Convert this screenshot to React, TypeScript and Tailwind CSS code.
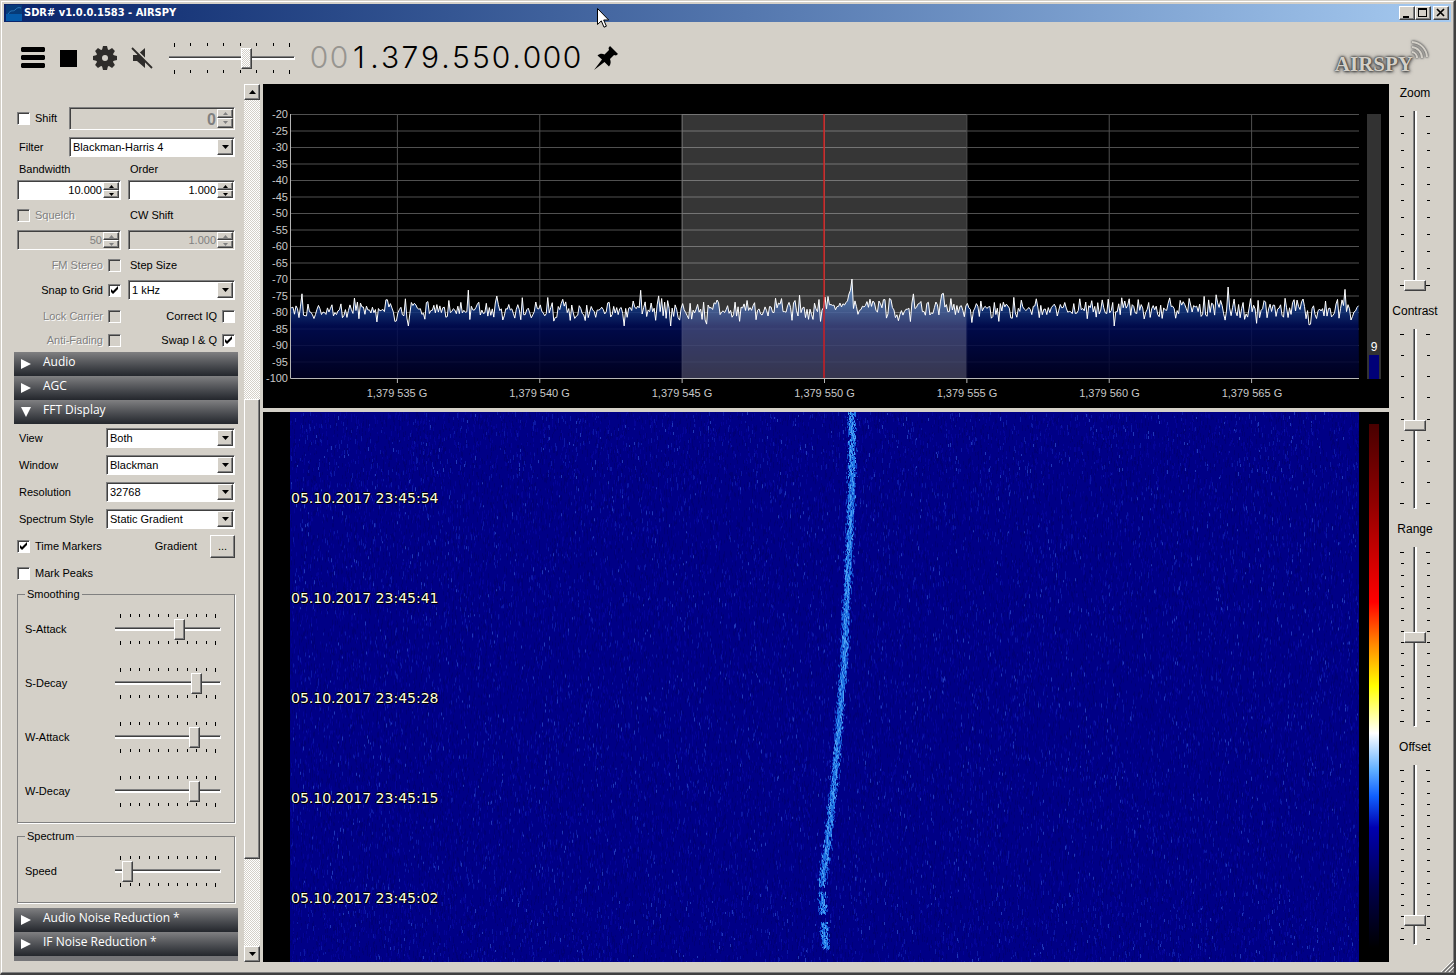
import { useId } from 'react';
import type { ReactNode } from 'react';
import clsx from 'clsx';

const raised = 'bg-[#d4d0c8] border border-t-white border-l-white border-r-[#404040] border-b-[#404040] shadow-[inset_-1px_-1px_0_#808080]';
const sunken = 'border border-t-[#808080] border-l-[#808080] border-r-white border-b-white shadow-[inset_1px_1px_0_#404040]';
const dither = 'bg-[repeating-conic-gradient(#ffffff_0_25%,#d4d0c8_0_50%)] bg-[length:2px_2px]';
const disabledText = 'text-[#808080] [text-shadow:1px_1px_0_white]';

function createRandom(seed: number) {
  let s = seed;
  return () => {
    s = (s * 1664525 + 1013904223) % 4294967296;
    return s / 4294967296;
  };
}

/* ---------- spectrum data ---------- */

const PLOT_W = 1070;
const PLOT_H = 264;

function buildSpectrum() {
  const rnd = createRandom(77);
  const points: string[] = [];
  for (let x = 0; x <= PLOT_W; x += 1.5) {
    const spread = rnd() < 0.14 ? 26 : 13;
    let y = 195 + (rnd() + rnd() - 1) * spread;
    const d = x - 562.5;
    // the carrier climbs slowly and drops off sharply
    if (d > -18 && d <= 0) y = y * 0.3 + 0.7 * (195 - 30 * Math.exp(d / 6));
    if (d > 0 && d < 10) y -= 20 * Math.exp(-d / 2);
    if (d === 0) y = 165;
    y = Math.max(165, Math.min(212, y));
    points.push(`${x.toFixed(1)},${y.toFixed(1)}`);
  }
  return points.join(' ');
}

const spectrum = buildSpectrum();

const levels = Array.from({ length: 17 }, (_, i) => -20 - i * 5);
const frequencies = ['535', '540', '545', '550', '555', '560', '565'];

/* ---------- waterfall data ---------- */

const FALL_W = 1069;
const FALL_H = 549;

function buildSpecks(seed: number, count: number, minLen: number, maxLen: number) {
  const rnd = createRandom(seed);
  let d = '';
  for (let i = 0; i < count; i += 1) {
    const x = Math.floor(rnd() * FALL_W);
    const y = Math.floor(rnd() * FALL_H);
    const len = Math.round(minLen + rnd() * (maxLen - minLen));
    d += `M${x}.5 ${y}v${len}`;
  }
  return d;
}

const carrier = [
  [0, 562], [70, 562], [140, 559], [200, 556], [250, 554], [300, 550],
  [350, 546], [400, 541], [450, 535], [472, 532], [500, 533], [549, 537],
];

function carrierX(y: number) {
  for (let i = 1; i < carrier.length; i += 1) {
    const [y0, x0] = carrier[i - 1];
    const [y1, x1] = carrier[i];
    if (y <= y1) return x0 + ((x1 - x0) * (y - y0)) / (y1 - y0);
  }
  return 537;
}

function buildCarrier(seed: number, perLine: number, width: number) {
  const rnd = createRandom(seed);
  let d = '';
  for (let y = 0; y < 535; y += 1) {
    const gap = (y > 472 && y < 479) || (y > 499 && y < 509);
    for (let i = 0; i < perLine && !gap; i += 1) {
      const x = Math.floor(carrierX(y) + (rnd() + rnd() - 1) * width);
      d += `M${x}.5 ${y}v${1 + Math.floor(rnd() * 3)}`;
    }
  }
  return d;
}

const specks = [
  { d: buildSpecks(3, 22000, 2, 6), color: '#000078' },
  { d: buildSpecks(11, 16000, 2, 5), color: '#040496' },
  { d: buildSpecks(29, 5000, 2, 5), color: '#0c18a4' },
  { d: buildSpecks(41, 1100, 2, 4), color: '#2038b8' },
  { d: buildCarrier(5, 3, 6), color: '#1048c8' },
  { d: buildCarrier(8, 3, 4), color: '#1e74e4' },
  { d: buildCarrier(13, 1, 4), color: '#4ca0f4' },
];

const timeMarkers = ['23:45:54', '23:45:41', '23:45:28', '23:45:15', '23:45:02'];

/* ---------- controls ---------- */

function CheckBox({
  label, checked, disabled, boxRight,
}: {
  label: string;
  checked?: boolean;
  disabled?: boolean;
  boxRight?: boolean;
}) {
  return (
    <label
      className={clsx(
        'flex items-center gap-[5px]',
        boxRight && 'flex-row-reverse justify-start',
        disabled && disabledText,
      )}
    >
      <span className="grid h-[13px] w-[13px]">
        <input
          type="checkbox"
          defaultChecked={checked}
          disabled={disabled}
          className={clsx('peer col-start-1 row-start-1 h-[13px] w-[13px] appearance-none bg-white disabled:bg-[#d4d0c8]', sunken)}
        />
        <svg viewBox="0 0 13 13" className="pointer-events-none col-start-1 row-start-1 hidden peer-checked:block" aria-hidden="true">
          <path d="M3 5v3l2 2 5-5V2L5 7z" fill="black" />
        </svg>
      </span>
      <span>{label}</span>
    </label>
  );
}

function Select({ id, value, className }: { id: string; value: string; className?: string }) {
  return (
    <div className={clsx('relative h-5', className)}>
      <select id={id} defaultValue={value} className={clsx('h-5 w-full appearance-none bg-white pl-[3px] leading-4 text-black', sunken)}>
        <option>{value}</option>
      </select>
      <span className={clsx('pointer-events-none absolute top-[2px] right-[2px] flex h-4 w-4 items-center justify-center', raised)}>
        <svg viewBox="0 0 7 4" className="h-1 w-[7px]" aria-hidden="true"><path d="M0 0h7L3.5 4z" /></svg>
      </span>
    </div>
  );
}

function NumberBox({
  label, value, disabled, large,
}: {
  label: string;
  value: string;
  disabled?: boolean;
  large?: boolean;
}) {
  return (
    <div className={clsx('flex min-w-0 flex-1 p-px', sunken, large ? 'h-[23px]' : 'h-5', disabled ? 'bg-[#d4d0c8]' : 'bg-white')}>
      <input
        type="text"
        aria-label={label}
        defaultValue={value}
        disabled={disabled}
        className={clsx('w-0 min-w-0 flex-1 bg-transparent pr-px text-right disabled:text-[#808080]', large && 'pt-[3px] text-base font-bold')}
      />
      <div className="flex w-4 flex-col">
        {['up', 'down'].map((dir) => (
          <button key={dir} type="button" aria-label={`${label} ${dir}`} disabled={disabled} className={clsx('flex flex-1 items-center justify-center', raised)}>
            <svg viewBox="0 0 5 3" className={clsx('h-[3px] w-[5px]', disabled && 'fill-[#808080]')} aria-hidden="true">
              <path d={dir === 'up' ? 'M0 3h5L2.5 0z' : 'M0 0h5L2.5 3z'} />
            </svg>
          </button>
        ))}
      </div>
    </div>
  );
}

function Ticks({ count, vertical }: { count: number; vertical?: boolean }) {
  return (
    <div className={clsx('flex justify-between', vertical ? 'w-1 flex-col items-center py-[5px]' : 'h-1 px-[5px]')} aria-hidden="true">
      {Array.from({ length: count }, (_, i) => (
        <span key={i} className={clsx('bg-black', vertical ? 'h-px w-[3px] first:w-1 last:w-1' : 'h-[3px] w-px first:h-1 last:h-1')} />
      ))}
    </div>
  );
}

function Slider({
  id, label, value, ticks, disabled, className,
}: {
  id?: string;
  label?: string;
  value: number;
  ticks: number;
  disabled?: boolean;
  className?: string;
}) {
  return (
    <div className={clsx('flex flex-col gap-px', className)}>
      <Ticks count={ticks} />
      <div className="grid h-[21px] items-center">
        <span className="col-start-1 row-start-1 h-1 border-t border-r border-b-2 border-t-[#808080] border-r-white border-b-white bg-[#404040]" />
        <input
          id={id}
          aria-label={label}
          type="range"
          defaultValue={value}
          className={clsx(
            'col-start-1 row-start-1 m-0 h-[21px] w-full appearance-none bg-transparent',
            '[&::-webkit-slider-thumb]:h-[21px] [&::-webkit-slider-thumb]:w-[11px] [&::-webkit-slider-thumb]:appearance-none [&::-webkit-slider-thumb]:border [&::-webkit-slider-thumb]:border-t-white [&::-webkit-slider-thumb]:border-r-[#404040] [&::-webkit-slider-thumb]:border-b-[#404040] [&::-webkit-slider-thumb]:border-l-white [&::-webkit-slider-thumb]:shadow-[inset_-1px_-1px_0_#808080]',
            disabled
              ? '[&::-webkit-slider-thumb]:bg-[repeating-conic-gradient(#ffffff_0_25%,#d4d0c8_0_50%)] [&::-webkit-slider-thumb]:bg-[length:2px_2px]'
              : '[&::-webkit-slider-thumb]:bg-[#d4d0c8]',
          )}
        />
      </div>
      <Ticks count={ticks} />
    </div>
  );
}

function VerticalSlider({ label, value, ticks }: { label: string; value: number; ticks: number }) {
  const id = useId();
  return (
    <div className="flex h-[218px] flex-col items-center pt-px">
      <label htmlFor={id} className="mb-[10px] text-[12px] leading-4">{label}</label>
      <div className="flex h-[180px]">
        <Ticks count={ticks} vertical />
        <div className="grid w-[22px] justify-items-center">
          <span className="col-start-1 row-start-1 h-full w-1 border-r-2 border-b border-l border-r-white border-b-white border-l-[#808080] bg-[#404040]" />
          <input
            id={id}
            type="range"
            defaultValue={value}
            className="col-start-1 row-start-1 m-0 h-[180px] w-[22px] appearance-none bg-transparent [direction:rtl] [writing-mode:vertical-lr] [&::-webkit-slider-thumb]:h-[11px] [&::-webkit-slider-thumb]:w-[22px] [&::-webkit-slider-thumb]:appearance-none [&::-webkit-slider-thumb]:border [&::-webkit-slider-thumb]:border-t-white [&::-webkit-slider-thumb]:border-r-[#404040] [&::-webkit-slider-thumb]:border-b-[#404040] [&::-webkit-slider-thumb]:border-l-white [&::-webkit-slider-thumb]:bg-[#d4d0c8] [&::-webkit-slider-thumb]:shadow-[inset_-1px_-1px_0_#808080]"
          />
        </div>
        <Ticks count={ticks} vertical />
      </div>
    </div>
  );
}

function PanelHeader({ title, open }: { title: string; open?: boolean }) {
  return (
    <button
      type="button"
      aria-expanded={!!open}
      className="flex h-6 w-full shrink-0 items-start bg-linear-to-b from-[#808082] via-[#505256] to-[#24272d] pl-[7px] text-left font-['Open_Sans',sans-serif] text-[12px] leading-5 text-white"
    >
      <svg viewBox="0 0 10 10" className="mt-[7px] mr-3 h-[10px] w-[10px] fill-white" aria-hidden="true">
        <path d={open ? 'M0 0h10L5 10z' : 'M0 0l10 5L0 10z'} />
      </svg>
      {title}
    </button>
  );
}

function SelectRow({ label, value }: { label: string; value: string }) {
  const id = useId();
  return (
    <div className="flex h-[27px] items-center justify-between pl-[2px]">
      <label htmlFor={id}>{label}</label>
      <Select id={id} value={value} className="w-[129px]" />
    </div>
  );
}

function SliderRow({ label, value }: { label: string; value: number }) {
  const id = useId();
  return (
    <div className="flex h-[54px] items-center justify-between pr-[13px] pl-[7px]">
      <label htmlFor={id}>{label}</label>
      <Slider id={id} value={value} ticks={11} className="w-[106px]" />
    </div>
  );
}

function Group({ title, children }: { title: string; children: ReactNode }) {
  return (
    <fieldset className="mb-[5px] border border-[#808080] pb-1 shadow-[1px_1px_0_white]">
      <legend className="ml-[7px] bg-[#d4d0c8] px-[2px] leading-4">{title}</legend>
      {children}
    </fieldset>
  );
}

/* ---------- title bar and toolbar ---------- */

function TitleBar() {
  return (
    <header className="flex h-[18px] items-center bg-linear-to-r from-[#0a246a] to-[#a6caf0] px-[2px]">
      <svg viewBox="0 0 16 16" className="mr-[2px] h-4 w-4" aria-hidden="true">
        <rect width="16" height="16" fill="#063a78" />
        <path d="M0 9h16v7H0z" fill="#0559a8" />
        <path d="M2 9c3-5 5-2 7-4s3-3 6-2" fill="none" stroke="#2a76b8" />
      </svg>
      <h1 className="flex-1 font-['DejaVu_Sans_Condensed','DejaVu_Sans',sans-serif] text-[11px] font-bold text-white">SDR# v1.0.0.1583 - AIRSPY</h1>
      <div className="flex">
        <button type="button" aria-label="Minimize" className={clsx('h-[14px] w-4', raised)}>
          <svg viewBox="0 0 14 12"><path d="M3 9h6v2H3z" /></svg>
        </button>
        <button type="button" aria-label="Maximize" className={clsx('h-[14px] w-4', raised)}>
          <svg viewBox="0 0 14 12"><path d="M2 1h9v9H2zM3 3v6h7V3z" fillRule="evenodd" /></svg>
        </button>
        <button type="button" aria-label="Close" className={clsx('ml-[2px] h-[14px] w-4', raised)}>
          <svg viewBox="0 0 14 12"><path d="M3 2l7 7M10 2L3 9" stroke="black" strokeWidth="1.7" /></svg>
        </button>
      </div>
    </header>
  );
}

function Frequency() {
  return (
    <div className="flex font-['Inter',sans-serif] text-[30px] leading-8 font-light">
      {'001.379.550.000'.split('').map((c, i) => (
        <span key={i} className={clsx('text-center', c === '.' ? 'w-[11px]' : 'w-5', i < 2 && 'text-[#979590]')}>{c}</span>
      ))}
    </div>
  );
}

function AirspyLogo() {
  return (
    <div className="relative mt-3 mr-[38px]">
      <span className="font-['Liberation_Serif',serif] text-[21px] leading-6 font-bold text-[#d4d0c8] [text-shadow:0_0_2px_#333,0_0_3px_#444,0_0_5px_#666,1px_1px_3px_#666]">AIRSPY</span>
      <svg viewBox="0 0 20 20" className="absolute -top-3 -right-4 h-5 w-5 overflow-visible fill-none [filter:drop-shadow(0_0_1px_#555)_drop-shadow(0_0_1px_#777)]" stroke="#d4d0c8" strokeWidth="2" aria-hidden="true">
        <path d="M3 12a6 6 0 0 1 5 6M3 7a11 11 0 0 1 10 11M3 2a16 16 0 0 1 15 15" />
      </svg>
    </div>
  );
}

function Toolbar() {
  return (
    <div className="flex h-[62px] items-center pt-[10px] pl-[17px]">
      <button type="button" aria-label="Menu" className="mr-[15px]">
        <svg viewBox="0 0 24 22" className="h-[22px] w-6">
          <path d="M1 0h22l1 1v3l-1 1H1L0 4V1zM1 8h22l1 1v3l-1 1H1l-1-1V9zM1 16h22l1 1v3l-1 1H1l-1-1v-3z" />
        </svg>
      </button>
      <button type="button" aria-label="Stop" className="mr-4">
        <svg viewBox="0 0 17 17" className="h-[17px] w-[17px]"><path d="M0 0h17v17H0z" /></svg>
      </button>
      <button type="button" aria-label="Settings" className="mr-[14px]">
        <svg viewBox="-12 -12 24 24" className="h-6 w-6" fill="#2e2c2a">
          {[0, 45, 90, 135].map((angle) => (
            <path key={angle} transform={`rotate(${angle})`} d="M-2-12h4l1 4v16l-1 4h-4l-1-4V-8z" />
          ))}
          <circle r="9" />
          <circle r="3" fill="#d4d0c8" />
        </svg>
      </button>
      <button type="button" aria-label="Mute" className="mr-4">
        <svg viewBox="0 0 22 22" className="h-[22px] w-[22px]">
          <path d="M2 8h4l8-7v20l-8-7H2z" fill="#2e2c2a" />
          <path d="M2 0l20 20" stroke="#d4d0c8" strokeWidth="2" />
          <path d="M1 1l20 20" stroke="#2e2c2a" strokeWidth="1.8" />
        </svg>
      </button>
      <Slider label="Volume" value={63} ticks={8} disabled className="w-[126px]" />
      <div className="mb-[2px] ml-[14px]"><Frequency /></div>
      <button type="button" aria-label="Pin frequency" className="ml-3">
        <svg viewBox="0 0 24 24" className="h-6 w-6">
          <path d="M16 0l8 8-2 1.5-2-.5-4 4c1 2.500 1 5-1 7.500l-4.500-4.500L0 24l8-10.500L3.500 9.500c2-2 5-2 7-1L15 4l-.5-2z" />
        </svg>
      </button>
      <div className="flex-1" />
      <AirspyLogo />
    </div>
  );
}

/* ---------- left column ---------- */

function RadioPanel() {
  const filterId = useId();
  const stepId = useId();
  return (
    <div className="px-[3px] pt-5">
      <div className="flex h-7 items-center">
        <div className="w-[52px]"><CheckBox label="Shift" /></div>
        <NumberBox label="Shift value" value="0" disabled large />
      </div>
      <div className="flex h-[30px] items-center">
        <label htmlFor={filterId} className="w-[52px] pl-[2px]">Filter</label>
        <Select id={filterId} value="Blackman-Harris 4" className="flex-1" />
      </div>
      <div className="grid grid-cols-[104px_1fr] items-center gap-x-[7px]">
        <div className="h-[14px] pl-[2px] leading-[14px]">Bandwidth</div>
        <div className="h-[14px] pl-[2px] leading-[14px]">Order</div>
        <div className="flex h-7 items-center"><NumberBox label="Bandwidth" value="10.000" /></div>
        <div className="flex h-7 items-center"><NumberBox label="Order" value="1.000" /></div>
        <CheckBox label="Squelch" disabled />
        <div className="flex h-[22px] items-center pl-[2px]">CW Shift</div>
        <div className="flex h-7 items-center"><NumberBox label="Squelch level" value="50" disabled /></div>
        <div className="flex h-7 items-center"><NumberBox label="CW Shift" value="1.000" disabled /></div>
        <CheckBox label="FM Stereo" disabled boxRight />
        <label htmlFor={stepId} className="flex h-[22px] items-center pl-[2px]">Step Size</label>
        <CheckBox label="Snap to Grid" checked boxRight />
        <div className="flex h-7 items-center"><Select id={stepId} value="1 kHz" className="flex-1" /></div>
        <div className="flex h-6 flex-col justify-center"><CheckBox label="Lock Carrier" disabled boxRight /></div>
        <CheckBox label="Correct IQ" boxRight />
        <div className="flex h-6 flex-col justify-center"><CheckBox label="Anti-Fading" disabled boxRight /></div>
        <CheckBox label="Swap I & Q" checked boxRight />
      </div>
    </div>
  );
}

function FftPanel() {
  return (
    <div className="px-[3px]">
      <SelectRow label="View" value="Both" />
      <SelectRow label="Window" value="Blackman" />
      <SelectRow label="Resolution" value="32768" />
      <SelectRow label="Spectrum Style" value="Static Gradient" />
      <div className="flex h-7 items-center">
        <CheckBox label="Time Markers" checked />
        <span className="mr-[13px] ml-auto">Gradient</span>
        <button type="button" aria-label="Edit gradient" className={clsx('h-[23px] w-[25px]', raised)}>...</button>
      </div>
      <div className="flex h-[26px] items-center"><CheckBox label="Mark Peaks" /></div>
      <Group title="Smoothing">
        <SliderRow label="S-Attack" value={62} />
        <SliderRow label="S-Decay" value={80} />
        <SliderRow label="W-Attack" value={78} />
        <SliderRow label="W-Decay" value={78} />
      </Group>
      <Group title="Spectrum">
        <SliderRow label="Speed" value={7} />
      </Group>
    </div>
  );
}

function ScrollBar() {
  return (
    <div className="ml-[6px] flex w-4 flex-col">
      <button type="button" aria-label="Scroll up" className={clsx('flex h-4 items-center justify-center', raised)}>
        <svg viewBox="0 0 7 4" className="h-1 w-[7px]"><path d="M0 4h7L3.5 0z" /></svg>
      </button>
      <div className={clsx('flex flex-1 flex-col', dither)}>
        <div className="flex-[299]" />
        <div className={clsx('flex-[459]', raised)} />
        <div className="flex-[87]" />
      </div>
      <button type="button" aria-label="Scroll down" className={clsx('flex h-4 items-center justify-center', raised)}>
        <svg viewBox="0 0 7 4" className="h-1 w-[7px]"><path d="M0 0h7L3.5 4z" /></svg>
      </button>
    </div>
  );
}

/* ---------- displays ---------- */

function SpectrumView() {
  return (
    <section className="flex h-[324px] bg-black pt-[22px] text-[11px] leading-4 text-[#c8c8c8]">
      <div className="flex h-[280px] w-[27px] flex-col justify-between pr-[2px] text-right">
        {levels.map((level) => <span key={level} className="h-4">{level}</span>)}
      </div>
      <div className="flex-1 pt-2">
        <svg viewBox={`0 0 ${PLOT_W} ${PLOT_H}`} preserveAspectRatio="none" className="block h-[264px] w-full overflow-visible" aria-label="Spectrum">
          <defs>
            <linearGradient id="spectrum-fill" gradientUnits="userSpaceOnUse" x1="0" y1="160" x2="0" y2={PLOT_H}>
              <stop offset="0" stopColor="#5a9ae0" />
              <stop offset="0.3" stopColor="#1a4690" />
              <stop offset="0.5" stopColor="#000c58" />
              <stop offset="1" stopColor="#000024" />
            </linearGradient>
          </defs>
          {levels.slice(0, -1).map((level, i) => (
            <path key={level} d={`M0 ${i * 16.5 + 0.5}H${PLOT_W}`} stroke="#505050" />
          ))}
          {frequencies.map((f, i) => (
            <path key={f} d={`M${107.5 + i * 142.5} 0V${PLOT_H}`} stroke="#505050" />
          ))}
          <polygon points={`0,${PLOT_H} ${spectrum} ${PLOT_W},${PLOT_H}`} fill="url(#spectrum-fill)" fillOpacity="0.85" />
          <rect x="392" width="285" height={PLOT_H} fill="white" fillOpacity="0.21" />
          <polyline points={spectrum} fill="none" stroke="white" />
          <path d={`M534.5 0V${PLOT_H}`} stroke="#e01818" strokeWidth="1.3" />
          <path d={`M0.5 0V${PLOT_H + 0.5}H${PLOT_W}`} fill="none" stroke="#b8b8b8" />
          {frequencies.map((f, i) => (
            <path key={f} d={`M${107.5 + i * 142.5} ${PLOT_H}v5`} stroke="#b8b8b8" />
          ))}
        </svg>
        <div className="mt-[7px] flex">
          <span className="w-[3.35%] shrink-0" />
          {frequencies.map((f) => <span key={f} className="w-[13.33%] shrink-0 text-center">{`1,379 ${f} G`}</span>)}
        </div>
      </div>
      <div className="mx-2 mt-2 flex h-[265px] w-[14px] flex-col items-center justify-end bg-[#323232] text-[12px] text-white">
        9
        <div className="h-6 w-[10px] bg-[#000078]" />
      </div>
    </section>
  );
}

function WaterfallView() {
  return (
    <section className="flex flex-1 bg-black pl-[27px]">
      <div className="relative flex-1 overflow-hidden bg-[#000086] pt-[78px]">
        <svg viewBox={`0 0 ${FALL_W} ${FALL_H}`} preserveAspectRatio="none" className="absolute inset-0 h-full w-full fill-none" aria-label="Waterfall">
          {specks.map((layer) => <path key={layer.color} d={layer.d} stroke={layer.color} />)}
        </svg>
        {timeMarkers.map((time) => (
          <div key={time} className="relative h-[100px] pl-px font-['DejaVu_Sans',sans-serif] text-[14px] leading-4 text-[#ffffe0] last:h-4 [text-shadow:1px_1px_0_black,-1px_0_0_black,0_-1px_0_black]">
            {`05.10.2017 ${time}`}
          </div>
        ))}
      </div>
      <div className="mt-3 mr-[10px] mb-[14px] ml-[10px] w-[10px] bg-[linear-gradient(to_bottom,#480000_0%,#900000_15%,#ff0000_34%,#ff8800_42%,#ffff00_50%,#ffffff_59%,#60b0ff_66%,#1060ff_71%,#0000b0_77%,#000050_88%,#000000_100%)]" />
    </section>
  );
}

export default function App() {
  return (
    <div className="relative flex min-h-screen flex-col border-t border-r-2 border-b-2 border-l border-t-[#d4d0c8] border-r-[#404040] border-b-[#404040] border-l-[#d4d0c8] bg-[#d4d0c8] font-['Liberation_Sans',sans-serif] text-[11px] leading-4 text-black">
      <div className="flex flex-1 flex-col border border-t-white border-r-[#808080] border-b-[#808080] border-l-white p-[2px]">
        <TitleBar />
        <Toolbar />
        <main className="flex flex-1 pb-2 pl-[10px]">
          <aside className="w-[224px] shrink-0">
            <RadioPanel />
            <PanelHeader title="Audio" />
            <PanelHeader title="AGC" />
            <PanelHeader title="FFT Display" open />
            <FftPanel />
            <PanelHeader title="Audio Noise Reduction *" />
            <PanelHeader title="IF Noise Reduction *" />
            <div className="h-[5px] bg-[#757578]" />
          </aside>
          <ScrollBar />
          <div className="ml-[3px] flex min-w-0 flex-1 flex-col gap-1">
            <SpectrumView />
            <WaterfallView />
          </div>
          <div className="w-[62px] shrink-0 pr-[10px]">
            <VerticalSlider label="Zoom" value={0} ticks={11} />
            <VerticalSlider label="Contrast" value={46} ticks={9} />
            <VerticalSlider label="Range" value={50} ticks={16} />
            <VerticalSlider label="Offset" value={11} ticks={16} />
          </div>
        </main>
      </div>
      <svg viewBox="0 0 14 14" className="absolute right-0 bottom-0 h-[14px] w-[14px]" aria-hidden="true">
        <path d="M2 14L14 2M6 14l8-8M10 14l4-4" stroke="#707070" strokeWidth="1.5" />
        <path d="M1 13L13 1M5 13l9-9M9 13l5-5" stroke="white" strokeWidth="0.8" />
      </svg>
      <svg viewBox="0 0 12 20" className="pointer-events-none absolute top-[7px] left-[41%] h-5 w-3" aria-hidden="true">
        <path d="M0.5 0.5v16l3.8-3.6 2.7 6.3 2.4-1-2.7-6.2h5z" fill="white" stroke="black" />
      </svg>
    </div>
  );
}
